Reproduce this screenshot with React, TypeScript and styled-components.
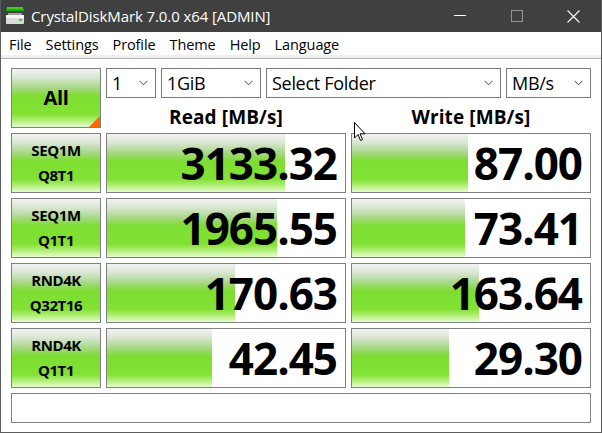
import styled, { createGlobalStyle } from "styled-components";

const GlobalStyle = createGlobalStyle`
  html, body {
    margin: 0;
    padding: 0;
    background: #ffffff;
  }
  body {
    font-family: "Open Sans", "Noto Sans", sans-serif;
  }
`;

const GREEN = `linear-gradient(
  to bottom,
  #f2f2f2 0%,
  #dbe7d6 14%,
  #a8d888 32%,
  #7edd32 46%,
  #82e234 78%,
  #b6f07e 90%,
  #e6fcd2 100%
)`;

export const Window = styled.div`
  position: relative;
  width: 602px;
  height: 433px;
  box-sizing: border-box;
  border: 1px solid #5c5c5c;
  border-top: none;
  display: flex;
  flex-direction: column;
  overflow: hidden;
  background: #ffffff;
`;

export const TitleBar = styled.div`
  height: 32px;
  background: #404040;
  display: flex;
  align-items: center;
  color: #ffffff;
  margin: 0 -1px;
  padding-left: 5px;

  .title {
    margin-left: 6px;
    font-size: 15px;
    letter-spacing: -0.1px;
    flex: 1;
  }
`;

export const WinButton = styled.div<{ $dim?: boolean }>`
  width: 57px;
  height: 32px;
  display: flex;
  align-items: center;
  justify-content: center;
  opacity: ${(p) => (p.$dim ? 0.45 : 1)};
`;

export const MenuBar = styled.div`
  height: 23px;
  display: flex;
  align-items: center;
  padding-left: 1px;
  background: #ffffff;
  border-bottom: 3px solid #f0f0f0;
  box-shadow: 0 1px 0 #b4b4b4;
  margin-bottom: 1px;

  span {
    font-size: 14.5px;
    color: #000;
    padding: 1px 7px 0;
    letter-spacing: -0.1px;
  }
`;

export const Body = styled.div`
  flex: 1;
  padding: 9px 10px 0 10px;
  display: grid;
  grid-template-columns: 90px 240px 240px;
  grid-template-rows: 60px 60px 60px 60px 60px 30px;
  gap: 5px;
`;

export const TestButton = styled.div<{ $big?: boolean }>`
  position: relative;
  box-sizing: border-box;
  border: 1px solid #808080;
  background: ${GREEN};
  display: flex;
  flex-direction: column;
  align-items: center;
  justify-content: center;
  font-weight: 700;
  font-size: ${(p) => (p.$big ? "20px" : "15px")};
  line-height: ${(p) => (p.$big ? "20px" : "25px")};
  letter-spacing: -0.4px;
  color: #000;
`;

export const Corner = styled.div`
  position: absolute;
  right: 0;
  bottom: 0;
  width: 0;
  height: 0;
  border-left: 11px solid transparent;
  border-bottom: 11px solid #ff6a00;
`;

export const TopArea = styled.div`
  grid-column: 2 / 4;
  display: flex;
  flex-direction: column;
`;

export const Selects = styled.div`
  display: flex;
  gap: 5px;
  height: 30px;
`;

export const Select = styled.div<{ $w: number }>`
  width: ${(p) => p.$w}px;
  box-sizing: border-box;
  border: 1px solid #7a7a7a;
  display: flex;
  align-items: center;
  justify-content: space-between;
  padding: 0 7px 0 5px;
  font-size: 18px;
  letter-spacing: -0.3px;
  color: #000;
`;

export const Headers = styled.div`
  flex: 1;
  display: grid;
  grid-template-columns: 240px 240px;
  gap: 5px;

  div {
    display: flex;
    align-items: flex-end;
    justify-content: center;
    font-weight: 700;
    font-size: 19px;
    line-height: 1;
    letter-spacing: 0.1px;
    padding-bottom: 1px;
  }
`;

export const Cell = styled.div`
  position: relative;
  box-sizing: border-box;
  border: 1px solid #808080;
  background: #ffffff;
  display: flex;
  align-items: center;
  justify-content: flex-end;
`;

export const Bar = styled.div`
  position: absolute;
  left: 0;
  top: 0;
  bottom: 0;
  background: ${GREEN};
`;

export const Value = styled.span`
  position: relative;
  font-weight: 700;
  font-size: 44px;
  letter-spacing: -1px;
  padding-right: 8px;
  line-height: 1;
  color: #000;
`;

export const Status = styled.div`
  grid-column: 1 / 4;
  box-sizing: border-box;
  border: 1px solid #808080;
`;

export const Cursor = styled.svg`
  position: absolute;
  left: 353px;
  top: 122px;
`;

const Chevron = () => (
  <svg width="9" height="6" viewBox="0 0 9 6">
    <path d="M0.5 0.8 L4.5 4.8 L8.5 0.8" fill="none" stroke="#444" strokeWidth="1" />
  </svg>
);

const AppIcon = () => (
  <svg width="20" height="20" viewBox="0 0 20 20">
    <rect x="2" y="1" width="16" height="4" fill="#3ecf1c" />
    <rect x="1" y="3" width="18" height="2" fill="#22a812" />
    <rect x="1" y="9" width="18" height="9" rx="1" fill="#d8dcd8" />
    <rect x="1" y="9" width="18" height="3" fill="#f4f6f4" />
    <rect x="3" y="7" width="14" height="2" fill="#9aa09a" />
    <rect x="14" y="13" width="3" height="2" fill="#2ed81a" />
  </svg>
);

const rows = [
  { l1: "SEQ1M", l2: "Q8T1", read: "3133.32", rw: 74.8, write: "87.00", ww: 48.7 },
  { l1: "SEQ1M", l2: "Q1T1", read: "1965.55", rw: 71.4, write: "73.41", ww: 47.5 },
  { l1: "RND4K", l2: "Q32T16", read: "170.63", rw: 53.8, write: "163.64", ww: 53.4 },
  { l1: "RND4K", l2: "Q1T1", read: "42.45", rw: 44.1, write: "29.30", ww: 40.8 },
];

const App = () => {
  return (
    <>
      <GlobalStyle />
      <Window>
        <TitleBar>
          <AppIcon />
          <span className="title">CrystalDiskMark 7.0.0 x64 [ADMIN]</span>
          <WinButton>
            <svg width="12" height="2" viewBox="0 0 12 2">
              <rect width="12" height="1" fill="#fff" />
            </svg>
          </WinButton>
          <WinButton $dim>
            <svg width="12" height="12" viewBox="0 0 12 12">
              <rect x="0.5" y="0.5" width="11" height="11" fill="none" stroke="#fff" />
            </svg>
          </WinButton>
          <WinButton>
            <svg width="13" height="13" viewBox="0 0 13 13">
              <path d="M0.5 0.5 L12.5 12.5 M12.5 0.5 L0.5 12.5" stroke="#fff" strokeWidth="1.1" />
            </svg>
          </WinButton>
        </TitleBar>
        <MenuBar>
          <span>File</span>
          <span>Settings</span>
          <span>Profile</span>
          <span>Theme</span>
          <span>Help</span>
          <span>Language</span>
        </MenuBar>
        <Body>
          <TestButton $big>
            All
            <Corner />
          </TestButton>
          <TopArea>
            <Selects>
              <Select $w={50}>
                1<Chevron />
              </Select>
              <Select $w={100}>
                1GiB<Chevron />
              </Select>
              <Select $w={235}>
                Select Folder<Chevron />
              </Select>
              <Select $w={85}>
                MB/s<Chevron />
              </Select>
            </Selects>
            <Headers>
              <div>Read [MB/s]</div>
              <div>Write [MB/s]</div>
            </Headers>
          </TopArea>
          {rows.map((r) => (
            <>
              <TestButton key={r.l1 + r.l2}>
                <span>{r.l1}</span>
                <span>{r.l2}</span>
              </TestButton>
              <Cell>
                <Bar style={{ width: `${r.rw}%` }} />
                <Value>{r.read}</Value>
              </Cell>
              <Cell>
                <Bar style={{ width: `${r.ww}%` }} />
                <Value>{r.write}</Value>
              </Cell>
            </>
          ))}
          <Status />
        </Body>
        <Cursor width="12" height="20" viewBox="0 0 12 20">
          <path d="M0.5 0.5 L0.5 16 L4 12.5 L6.5 18.5 L8.5 17.5 L6 11.8 L11 11.8 Z" fill="#fff" stroke="#000" strokeWidth="1" />
        </Cursor>
      </Window>
    </>
  );
};

export default App;
